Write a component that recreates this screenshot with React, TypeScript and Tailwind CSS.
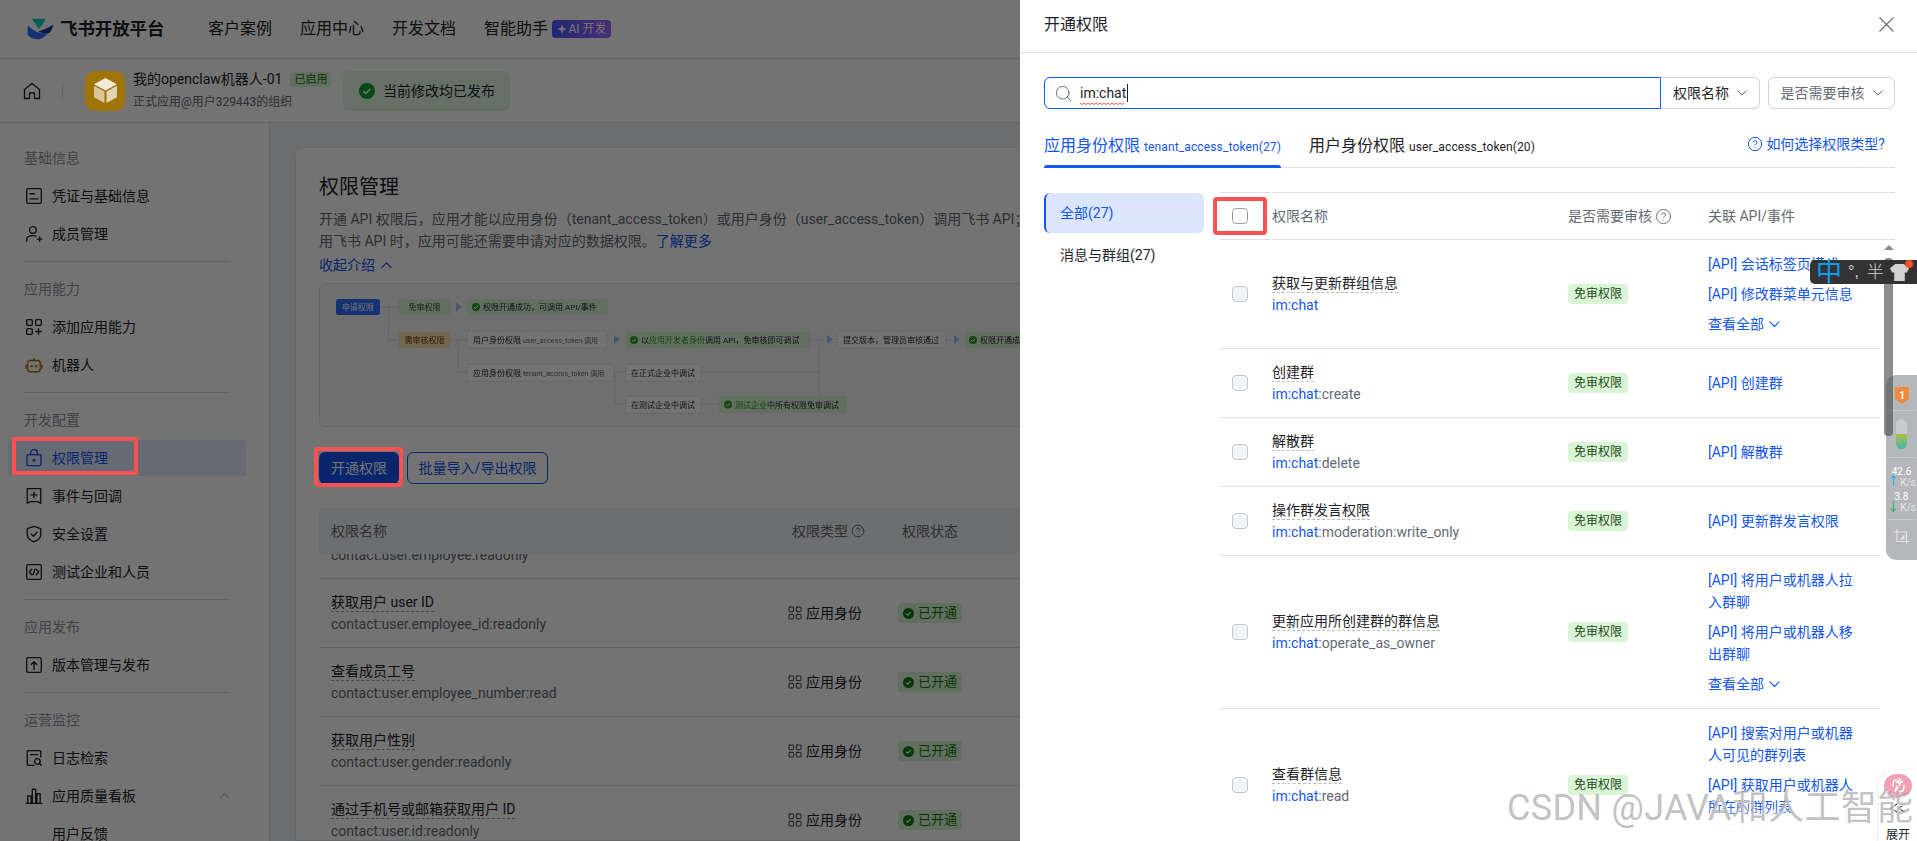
import React from "react";
import { Search, CircleHelp, LayoutGrid } from "lucide-react";

const S = ({ children, className = "" }: { children: React.ReactNode; className?: string }) => (
  <svg viewBox="0 0 16 16" fill="none" stroke="currentColor" strokeWidth="1.2" strokeLinecap="round" strokeLinejoin="round" className={"w-[18px] h-[18px] -mx-px shrink-0 " + className}>
    {children}
  </svg>
);

const Chev = ({ up, w = 11, className = "" }: { up?: boolean; w?: number; className?: string }) => (
  <svg viewBox="0 0 12 7" width={w} height={(w * 7) / 12} fill="none" stroke="currentColor" strokeWidth="1.200" strokeLinecap="round" strokeLinejoin="round" className={"shrink-0 " + className}>
    <path d={up ? "M1 6l5-5 5 5" : "M1 1l5 5 5-5"} />
  </svg>
);

const icons: Record<string, React.ReactNode> = {
  cred: <S><rect x="1.5" y="1.5" width="13" height="13" rx="1.5" /><path d="M4.5 6h4M4.5 10.5h7" /></S>,
  member: <S><circle cx="7" cy="4.5" r="3" /><path d="M1.5 14.5v-1.5c0-2 1.8-3.5 5.5-3.5 1 0 2 .1 2.8.4M11 12.5h4M13 10.5v4" /></S>,
  add: <S><rect x="1.5" y="1.5" width="5" height="5" rx="1" /><rect x="9.5" y="1.5" width="5" height="5" rx="1" /><rect x="1.5" y="9.5" width="5" height="5" rx="1" /><path d="M9.5 12h5M12 9.5v5" /></S>,
  bot: <S className="text-[#a8690c]"><rect x="2.5" y="4" width="11" height="10" rx="2" /><path d="M8 4V2M1 8v3M15 8v3" /><circle cx="6" cy="9" r=".5" fill="currentColor" /><circle cx="10" cy="9" r=".5" fill="currentColor" /></S>,
  perm: <S><rect x="1.8" y="5" width="12.4" height="9.8" rx="1.2" /><path d="M5 5V3.5a3 3 0 0 1 6 0V5" /><circle cx="8" cy="10" r=".7" fill="currentColor" /></S>,
  event: <S><path d="M2 1.5h12v13l-2.5-1.5h-7L2 14.5z" /><path d="M5.5 7h5M8 4.5v5" /></S>,
  safe: <S><path d="M8 1.2l6 2v5.5c0 3-2.5 5-6 6.3-3.5-1.3-6-3.3-6-6.3V3.200z" /><path d="M5.5 8l2 2 3.200-3.500" /></S>,
  test: <S><rect x="1.5" y="1.500" width="13" height="13" rx="1.500" /><path d="M6 5.500L3.800 8 6 10.500M10 5.500L12.200 8 10 10.500M8.800 5.500l-1.600 5" /></S>,
  ver: <S><rect x="1.500" y="1.500" width="13" height="13" rx="1.500" /><path d="M8 12V5M5.500 7.500L8 5l2.500 2.500" /></S>,
  log: <S><path d="M14 7V2.500a1 1 0 0 0-1-1H3a1 1 0 0 0-1 1v11a1 1 0 0 0 1 1h5" /><path d="M5 5h6" /><circle cx="11" cy="11" r="2.500" /><path d="M13 13l1.500 1.500" /></S>,
  chart: <S><path d="M1 14.500h14M2.500 14.500V8h3v6.500M6.500 14.500V2h3v12.500M10.500 14.500V6h3v8.500" /></S>,
};

function SideItem({ icon, text, active, chevron }: { icon?: string; text: string; active?: boolean; chevron?: boolean }) {
  return (
    <div className={"h-9 ml-2 w-[238px] rounded flex items-center gap-[10px] pl-[18px] pr-[17px] text-sm " + (active ? "bg-[#e1eaff] text-[#1456f0]" : "text-[#1f2329]")}>
      {icon ? icons[icon] : <span className="w-4 h-4 shrink-0" />}
      <span className="flex-1">{text}</span>
      {chevron && <Chev up w={9} className="text-[#8f959e]" />}
    </div>
  );
}

function Group({ label, items, last }: { label: string; items: { icon?: string; text: string; active?: boolean; chevron?: boolean }[]; last?: boolean }) {
  return (
    <div>
      <div className="h-[22px] leading-[22px] mb-[9px] pl-6 text-sm text-[#8f959e]">{label}</div>
      <div className="flex flex-col gap-[2px]">
        {items.map((it) => (
          <SideItem key={it.text} {...it} />
        ))}
      </div>
      {!last && <div className="mt-[9px] mb-4 ml-6 w-[206px] h-px bg-[#dee0e3]" />}
    </div>
  );
}

const Opened = () => (
  <span className="w-16 h-5 rounded bg-[#d9f5d6] text-[#0f7b0f] text-[13px] flex items-center justify-center gap-1">
    <svg viewBox="0 0 16 16" className="w-[11px] h-[11px]"><circle cx="8" cy="8" r="8" fill="#0f7b0f" /><path d="M4.500 8.200l2.400 2.300 4.300-4.500" stroke="#fff" strokeWidth="1.800" fill="none" /></svg>
    已开通
  </span>
);

const leftRows = [
  ["获取用户受雇信息", "contact:user.employee:readonly"],
  ["获取用户 user ID", "contact:user.employee_id:readonly"],
  ["查看成员工号", "contact:user.employee_number:read"],
  ["获取用户性别", "contact:user.gender:readonly"],
  ["通过手机号或邮箱获取用户 ID", "contact:user.id:readonly"],
];

function Box({ x, y, w, h, fill, stroke, dashed }: { x: number; y: number; w: number; h: number; fill: string; stroke?: string; dashed?: boolean }) {
  return <rect x={x} y={y} width={w} height={h} rx="2.500" fill={fill} stroke={stroke} strokeDasharray={dashed ? "1.500 1.500" : undefined} strokeWidth=".8" />;
}

function Diagram() {
  const dash = "#b7c4ea";
  const lines = "M60 23H78M68.500 23V56H78M130 56H147M138 56V88H147M294 88H305M295 88V120H305M381 120H399M381 88H499M499 56V112M490 56H505M626 56H632";
  const green = "#d9f5d6";
  const tx = "fill-[#1f2329]";
  const arrows = [139, 297, 510, 637];
  const check = (x: number, y: number) => (
    <g>
      <circle cx={x} cy={y} r="4" fill="#2ea121" />
      <path d={`M${x - 2} ${y}l1.500 1.500 2.500-2.800`} stroke="#fff" strokeWidth="1" fill="none" />
    </g>
  );
  return (
    <svg viewBox="0 0 760 144" className="w-[760px] h-[144px] block blur-[0.35px] font-['Roboto','Noto_Sans_CJK_SC',sans-serif]" fontSize="8">
      <path d={lines} stroke={dash} strokeWidth=".8" strokeDasharray="1.500 1.500" fill="none" />
      {arrows.map((x) => (
        <path key={x} d={x === 139 ? `M${x - 3} 18.500l6 4.500-6 4.500z` : `M${x - 3} 51l6 4.500-6 4.500z`} fill="#a8bdf5" />
      ))}
      <Box x={16} y={15} w={44} h={16} fill="#3370ff" />
      <text x={38} y={26} textAnchor="middle" fill="#fff">申请权限</text>
      <Box x={78.500} y={15} w={52} h={16} fill={green} />
      <text x={104.500} y={26} textAnchor="middle" fill="#1f5a1a">免审权限</text>
      <Box x={147} y={15} w={141} h={16} fill={green} />
      {check(156, 23)}
      <text x={163} y={26} className={tx}>权限开通成功，可调用 API/事件</text>
      <Box x={78.500} y={48} w={52} h={16} fill="#fde2b8" />
      <text x={104.500} y={59} textAnchor="middle" fill="#6b3a00">需审核权限</text>
      <Box x={147} y={47} w={140} h={17} fill="#fff" stroke={dash} dashed />
      <text x={153} y={59} className={tx}>用户身份权限 <tspan fontSize="7" fill="#646a73">user_access_token 调用</tspan></text>
      <Box x={305.500} y={48} w={185} h={16} fill={green} />
      {check(314, 56)}
      <text x={321} y={59} className={tx}>以<tspan fill="#2ea121">应用开发者身份</tspan>调用 API，免审核即可调试</text>
      <Box x={517} y={47} w={109} h={17} fill="#fff" stroke={dash} dashed />
      <text x={523} y={59} className={tx}>提交版本，管理员审核通过</text>
      <Box x={645} y={48} w={110} h={16} fill={green} />
      {check(653, 56)}
      <text x={660} y={59} className={tx}>权限开通成功</text>
      <Box x={147} y={80} w={147} h={17} fill="#fff" stroke={dash} dashed />
      <text x={153} y={92} className={tx}>应用身份权限 <tspan fontSize="7" fill="#646a73">tenant_access_token 调用</tspan></text>
      <Box x={305.500} y={80} w={75.500} h={17} fill="#fff" stroke={dash} dashed />
      <text x={311} y={92} className={tx}>在正式企业中调试</text>
      <Box x={305.500} y={112} w={75.500} h={17} fill="#fff" stroke={dash} dashed />
      <text x={311} y={124} className={tx}>在测试企业中调试</text>
      <Box x={399} y={112} w={128} h={17} fill={green} />
      {check(408, 120.500)}
      <text x={415} y={124} className={tx}><tspan fill="#2ea121">测试企业</tspan>中所有权限免审调试</text>
    </svg>
  );
}

function LeftPage() {
  return (
    <div className="relative w-[1020px] h-full shrink-0 overflow-hidden bg-white flex flex-col">
      <header className="h-[59px] shrink-0 border-b border-[#dee0e3] flex items-center pl-[27px]">
        <svg viewBox="50 33 82 66" className="w-[27px] h-[22px]">
          <path d="M65 35h42c-5 12-12 22-22 30z" fill="#00d6b9" />
          <path d="M82 72c14 0 32-10 48-20-3 14-8 24-14 27-12 1-24-2-34-7z" fill="#133c9a" />
          <path d="M52 55c10 10 24 19 36 22 9 2 18 2 26 1-8 11-18 19-32 19-14 0-30-8-30-18z" fill="#3370ff" />
        </svg>
        <span className="ml-[6px] w-[124px] text-[17.500px] font-bold tracking-[-0.100px] text-[#1f2329]">飞书开放平台</span>
        <nav className="ml-6 flex items-center gap-7 text-base text-[#1f2329]">
          <span>客户案例</span>
          <span>应用中心</span>
          <span>开发文档</span>
          <span className="flex items-center gap-1">
            智能助手
            <span className="w-[59px] h-[18px] rounded bg-gradient-to-r from-[#4a56ff] to-[#a066ff] text-white text-xs flex items-center justify-center gap-[2px]">
              <svg viewBox="0 0 10 10" className="w-[10px] h-[10px]"><path d="M5 0l1.200 3.800L10 5 6.200 6.200 5 10 3.800 6.200 0 5l3.800-1.200z" fill="#fff" /></svg>
              AI 开发
            </span>
          </span>
        </nav>
      </header>
      <div className="h-[64px] shrink-0 border-b border-[#dee0e3] flex items-center pl-[23px]">
        <svg viewBox="0 0 18 18" className="w-[18px] h-[18px]" fill="none" stroke="#1f2329" strokeWidth="1.300" strokeLinejoin="round">
          <path d="M1.500 7.500L9 1.500l7.500 6V16.500H11.500V11h-5v5.500H1.500z" />
        </svg>
        <span className="ml-[21px] w-px h-4 bg-[#dee0e3]" />
        <span className="relative z-20 ml-[22px] w-10 h-10 rounded-[10px] bg-[#a17408] flex items-center justify-center">
          <svg viewBox="0 0 26 26" className="w-[27px] h-[27px]">
            <path d="M13 1l11 6-11 6L2 7z" fill="#fff" fillOpacity=".85" />
            <path d="M2 8.500l10 5.500v11L2 19.500z" fill="#fff" fillOpacity=".6" />
            <path d="M24 8.500l-10 5.500v11l10-5.500z" fill="#fff" fillOpacity=".7" />
          </svg>
        </span>
        <div className="ml-2 w-[202px]">
          <div className="flex items-center h-[20px] text-sm text-[#1f2329]">
            我的openclaw机器人-01
            <span className="ml-2 h-[15px] px-1 rounded bg-[#d9f5d6] text-[#0f7b0f] text-[11px] leading-[15px]">已启用</span>
          </div>
          <div className="mt-[3px] text-xs text-[#646a73] leading-[20px]">正式应用@用户329443的组织</div>
        </div>
        <div className="ml-[8px] w-[167px] h-10 rounded-md bg-[#e4f8e4] flex items-center pl-4 gap-2 text-sm text-[#1f2329]">
          <svg viewBox="0 0 16 16" className="w-4 h-4"><circle cx="8" cy="8" r="8" fill="#0f9d3a" /><path d="M4.500 8.200l2.400 2.300 4.300-4.500" stroke="#fff" strokeWidth="1.600" fill="none" /></svg>
          当前修改均已发布
        </div>
      </div>
      <div className="flex-1 flex min-h-0">
        <aside className="w-[270px] shrink-0 border-r border-[#dee0e3] pt-6">
          <Group label="基础信息" items={[{ icon: "cred", text: "凭证与基础信息" }, { icon: "member", text: "成员管理" }]} />
          <Group label="应用能力" items={[{ icon: "add", text: "添加应用能力" }, { icon: "bot", text: "机器人" }]} />
          <Group label="开发配置" items={[{ icon: "perm", text: "权限管理", active: true }, { icon: "event", text: "事件与回调" }, { icon: "safe", text: "安全设置" }, { icon: "test", text: "测试企业和人员" }]} />
          <Group label="应用发布" items={[{ icon: "ver", text: "版本管理与发布" }]} />
          <Group last label="运营监控" items={[{ icon: "log", text: "日志检索" }, { icon: "chart", text: "应用质量看板", chevron: true }, { text: "用户反馈" }]} />
        </aside>
        <main className="flex-1 min-w-0 bg-[#f0f2f3] pl-[25px] pt-6">
          <div className="w-[800px] h-full bg-white border border-[#e5e6e8] rounded-t-lg pl-[23px] pt-[25px]">
            <h1 className="text-xl leading-7 text-[#1f2329]">权限管理</h1>
            <div className="mt-[7px] text-sm leading-[22px] text-[#646a73] whitespace-nowrap">
              <div>开通 API 权限后，应用才能以应用身份（tenant_access_token）或用户身份（user_access_token）调用飞书 API；</div>
              <div>用飞书 API 时，应用可能还需要申请对应的数据权限。<span className="text-[#1456f0]">了解更多</span></div>
              <div className="mt-[2px] flex items-center gap-[6px] text-[#1456f0]">收起介绍 <Chev up w={11} /></div>
            </div>
            <div className="mt-[7px] w-[760px] h-[144px] rounded-md border border-[#e5e6e8] bg-[#f5f6f7] overflow-hidden">
              <Diagram />
            </div>
            <div className="mt-[25px] flex gap-2">
              <button className="w-20 h-8 rounded-md bg-[#1456f0] text-white text-sm">开通权限</button>
              <button className="w-[141px] h-8 rounded-md border border-[#1456f0] text-[#1456f0] text-sm">批量导入/导出权限</button>
            </div>
            <div className="mt-6">
              <div className="relative z-[1] h-[46px] bg-[#f2f3f5] grid grid-cols-[470px_109px_1fr] items-center text-sm text-[#646a73]">
                <span className="pl-3">权限名称</span>
                <span className="pl-[3px] flex items-center gap-[3px]">权限类型 <CircleHelp className="w-[14px] h-[14px]" strokeWidth={1.600} /></span>
                <span className="pl-1">权限状态</span>
              </div>
              <div className="-mt-[44px]">
                {leftRows.map(([n, c]) => (
                  <div key={c} className="h-[69px] shrink-0 border-b border-[#dee0e3] grid grid-cols-[470px_109px_1fr] items-center text-sm">
                    <div className="pl-3 leading-[22px]">
                      <div><span className="inline-block leading-[18px] border-b border-dashed border-[#a0a4aa] text-[#1f2329]">{n}</span></div>
                      <div className="text-[#646a73]">{c}</div>
                    </div>
                    <div className="text-[#1f2329] -ml-[2px] flex items-center gap-[3px]"><LayoutGrid className="w-4 h-4" strokeWidth={1.300} /> 应用身份</div>
                    <Opened />
                  </div>
                ))}
              </div>
            </div>
          </div>
        </main>
      </div>
      <div className="absolute inset-0 z-[2] bg-black/55" />
    </div>
  );
}

const rows: { n: string; c: string; links: string[]; more?: boolean }[] = [
  { n: "获取与更新群组信息", c: "", links: ["[API] 会话标签页模式", "[API] 修改群菜单元信息"], more: true },
  { n: "创建群", c: ":create", links: ["[API] 创建群"] },
  { n: "解散群", c: ":delete", links: ["[API] 解散群"] },
  { n: "操作群发言权限", c: ":moderation:write_only", links: ["[API] 更新群发言权限"] },
  { n: "更新应用所创建群的群信息", c: ":operate_as_owner", links: ["[API] 将用户或机器人拉入群聊", "[API] 将用户或机器人移出群聊"], more: true },
  { n: "查看群信息", c: ":read", links: ["[API] 搜索对用户或机器人可见的群列表", "[API] 获取用户或机器人所在的群列表"], more: true },
];

function Drawer() {
  return (
    <div className="relative flex-1 h-full flex flex-col bg-white">
      <div className="h-[53px] shrink-0 border-b border-[#dee0e3] flex items-center justify-between pl-6 pr-[23px]">
        <span className="text-base text-[#1f2329] -mt-[3px]">开通权限</span>
        <svg viewBox="0 0 15 15" className="w-[15px] h-[15px] -mt-[3px]" fill="none" stroke="#646a73" strokeWidth="1.100"><path d="M.5.5l14 14M14.500.5l-14 14" /></svg>
      </div>
      <div className="pl-6 pr-[22px] shrink-0">
        <div className="mt-6 flex h-8">
          <div className="relative w-[617px] rounded-l-md border border-[#1456f0] flex items-center pl-[9px] text-sm text-[#1f2329]">
            <Search className="w-[19px] h-[19px] text-[#646a73]" strokeWidth={1.200} />
            <span className="relative ml-[7px] pr-px border-r border-[#1f2329] leading-[18px]">
              im:chat
              <svg viewBox="0 0 46 3" className="absolute left-0 top-[18px] w-[46px] h-[3px]"><path d="M0 1l2 1.500 2-1.500 2 1.500 2-1.500 2 1.500 2-1.500 2 1.500 2-1.500 2 1.500 2-1.500 2 1.500 2-1.500 2 1.500 2-1.500 2 1.500 2-1.500 2 1.500 2-1.500 2 1.500 2-1.500 2 1.500 2-1.500" stroke="#e5383b" strokeWidth=".8" fill="none" /></svg>
            </span>
          </div>
          <div className="w-[99px] rounded-r-md border border-l-0 border-[#d0d3d6] flex items-center justify-center gap-2 text-sm text-[#1f2329]">
            权限名称 <Chev w={10} className="text-[#646a73]" />
          </div>
          <div className="ml-2 w-[127px] rounded-md border border-[#d0d3d6] flex items-center justify-center gap-2 text-sm text-[#646a73]">
            是否需要审核 <Chev w={10} />
          </div>
        </div>
        <div className="mt-4 h-[43px] border-b border-[#dee0e3] flex items-start justify-between pt-[9px]">
          <div className="flex gap-7">
            <div className="relative h-[31px] text-[#1456f0]">
              <span className="text-base">应用身份权限</span> <span className="text-xs tracking-[0.13px]">tenant_access_token(27)</span>
              <span className="absolute left-0 right-0 top-[31px] h-[3px] rounded-t bg-[#1456f0]" />
            </div>
            <div className="text-[#1f2329]"><span className="text-base">用户身份权限</span> <span className="text-xs tracking-[0.13px]">user_access_token(20)</span></div>
          </div>
          <div className="flex items-center gap-[3px] pr-[10px] text-sm text-[#1456f0]"><CircleHelp className="w-4 h-4" strokeWidth={1.500} /> 如何选择权限类型?</div>
        </div>
      </div>
      <div className="flex-1 min-h-0 flex pl-6 pr-[22px] mt-6">
        <div className="w-40 shrink-0 pt-px text-sm flex flex-col gap-[2px]">
          <div className="h-10 rounded-md border-l-2 border-[#1456f0] bg-[#dbe6fd] text-[#1456f0] pl-[14px] flex items-center">全部(27)</div>
          <div className="h-10 pl-4 flex items-center text-[#1f2329]">消息与群组(27)</div>
        </div>
        <div className="ml-4 flex-1 min-w-0 flex flex-col border-t border-[#dee0e3]">
          <div className="h-[47px] shrink-0 border-b border-[#dee0e3] grid grid-cols-[52px_296px_140px_1fr] items-center text-sm text-[#646a73]">
            <span className="ml-3 w-4 h-4 rounded border border-[#9ea2a8] bg-white" />
            <span>权限名称</span>
            <span className="flex items-center gap-[3px]">是否需要审核 <CircleHelp className="w-[17px] h-[17px]" strokeWidth={1.300} /></span>
            <span>关联 API/事件</span>
          </div>
          <div className="flex-1 min-h-0 overflow-hidden w-[660px]">
            {rows.map((r) => (
              <div key={r.n} className="min-h-[69px] border-b border-[#dee0e3] grid grid-cols-[52px_296px_140px_1fr] items-center text-sm leading-[22px] py-[13px] box-border">
                <span className="ml-3 w-4 h-4 rounded border border-[#c5c8cc] bg-[#f2f3f5]" />
                <div className="-my-3">
                  <div><span className="inline-block leading-[18px] border-b border-dashed border-[#bbbfc4] text-[#1f2329]">{r.n}</span></div>
                  <div className="text-[#646a73]"><span className="text-[#1456f0]">im:chat</span>{r.c}</div>
                </div>
                <span className="w-[60px] h-5 rounded bg-[#d9f5d6] text-[#1f4a1a] text-xs flex items-center justify-center">免审权限</span>
                <div className={"w-[153px] flex flex-col gap-2 text-[#1456f0] " + (r.links.length === 1 ? "-my-3" : "")}>
                  {r.links.map((l) => <div key={l}>{l}</div>)}
                  {r.more && <div className="flex items-center gap-[5px]">查看全部 <Chev w={11} /></div>}
                </div>
              </div>
            ))}
          </div>
        </div>
      </div>
      <div className="relative h-[9px] shrink-0 bg-white border-t border-[#dee0e3]">
        <div className="absolute left-0 right-0 bottom-full h-7 bg-gradient-to-t from-white to-transparent" />
      </div>
    </div>
  );
}

function Overlays() {
  return (
    <>
      {/* red annotations */}
      <div className="absolute z-10 left-[12px] top-[437px] w-[126px] h-[38px] border-4 border-[#fa5252]" />
      <div className="absolute z-10 left-[314px] top-[447px] w-[89px] h-[40px] border-4 border-[#fa5252] rounded-sm" />
      <div className="absolute z-10 left-[1213px] top-[197px] w-[54px] h-[38px] border-4 border-[#fa5252] rounded-sm" />

      {/* scrollbar */}
      <div className="absolute z-10 left-[1884px] top-[240px] w-[9px] h-[18px] flex justify-center pt-[5px]">
        <span className="w-0 h-0 border-x-[5px] border-x-transparent border-b-[5px] border-b-[#8c8c8c]" />
      </div>

      {/* system widget */}
      <div className="absolute z-10 left-[1886px] top-[375px] w-[31px] h-[185px] rounded-l-[10px] bg-[#b6b7bb] flex flex-col items-center text-white text-[10px] leading-[11px]">
        <svg viewBox="0 0 14 17" className="mt-[12px] w-[14px] h-[17px]"><path d="M0 0h14v12l-7 5-7-5z" fill="#f08a3c" /><text x="7" y="11.500" fontSize="10" fontWeight="700" textAnchor="middle" fill="#fff">1</text></svg>
        <span className="mt-[6px] w-[29px] h-px bg-[#c8c9cc]" />
        <span className="mt-2 w-[11px] h-[30px] rounded-full overflow-hidden bg-[#c9cacd] flex items-end">
          <span className="w-full h-[15px] bg-gradient-to-b from-[#a6c23a] to-[#3ab5a8]" />
        </span>
        <span className="mt-2 w-[29px] h-px bg-[#c8c9cc]" />
        <span className="mt-[8px]">42.6</span>
        <span className="h-[11px] flex items-center gap-[1px] text-[#e8e8ea]"><span className="text-[#14a8ff] text-xs leading-[11px]">↑</span>K/s</span>
        <span className="mt-[3px]">3.8</span>
        <span className="h-[11px] flex items-center gap-[1px] text-[#e8e8ea]"><span className="text-[#0bb55a] text-xs leading-[11px]">↓</span>K/s</span>
        <span className="mt-[6px] w-[29px] h-px bg-[#c8c9cc]" />
        <svg viewBox="0 0 16 16" className="mt-[9px] w-[16px] h-[16px]" fill="none" stroke="#e4e4e6" strokeWidth="1.200"><path d="M3 0v12.500h12.500M0 3h12.500v12.500" /><path d="M10.500 5.500v5h-5z" fill="#e4e4e6" stroke="none" /></svg>
      </div>
      <div className="absolute z-10 left-[1884px] top-[258px] w-[9px] h-[178px] rounded-[4px] bg-[#505050]/65" />

      {/* IME bar */}
      <div className="absolute z-10 left-[1810px] top-[260px] w-[107px] h-6 rounded-l-[5px] bg-[#333333] flex items-center pl-[6px] text-[#cfcfcf]">
        <span className="w-[26px] text-[26px] leading-6 text-[#0f9bf5]">中</span>
        <span className="ml-[6px] text-base leading-4 font-['Liberation_Sans',sans-serif]">°,</span>
        <span className="ml-[8px] text-[17px] leading-4 font-light">半</span>
        <svg viewBox="0 0 18 16" className="ml-[6px] w-[19px] h-[17px]"><path d="M5 0h8l5 4-2 4h-2v8H4V8H2L0 4z" fill="#d3d3d3" /></svg>
        <span className="absolute left-[95px] top-0 w-[8px] h-[8px] rounded-full bg-[#ff4f28]" />
      </div>

      {/* assistant */}
      <div className="absolute z-10 left-[1879px] top-[770px] w-[38px] h-[71px] rounded-tl-[18px] bg-white flex flex-col items-center pt-1 shadow-[-2px_0_6px_rgba(0,0,0,0.06)]">
        <span className="w-[28px] h-[28px] rounded-full bg-[#f0a0b4] flex items-center justify-center">
          <svg viewBox="0 0 16 16" className="w-[17px] h-[17px]" fill="none" stroke="#fff" strokeWidth="1.300"><path d="M3 9V6c0-2 1.500-3.500 3.500-3.500M13 7v3c0 2-1.500 3.500-3.500 3.500" /><path d="M9 2l.8 2 2 .8-2 .8L9 7.600l-.8-2-2-.8 2-.8zM4.500 14l2-5 2 5M5.300 12.500h2.500" /></svg>
        </span>
        <svg viewBox="0 0 18 12" className="mt-[5px] w-[18px] h-[12px]" fill="none" stroke="#1f2329" strokeWidth="1.200"><path d="M8 1L1 6l7 5M17 1l-7 5 7 5" /></svg>
        <span className="mt-[16px] text-xs leading-[12px] text-[#1f2329]">展开</span>
      </div>

      {/* watermark */}
      <div className="absolute z-10 left-[1507px] top-[783px] whitespace-nowrap text-[36px] tracking-[0.3px] leading-[50px] text-[#9a9a9a]/60 [text-shadow:1px_1px_1px_rgba(255,255,255,0.8)] font-['Roboto','Noto_Sans_CJK_SC',sans-serif]">
        CSDN @JAVA和人工智能
      </div>
    </>
  );
}

export default function App() {
  return (
    <div className="relative w-[1917px] h-[841px] overflow-hidden flex font-['Roboto','Noto_Sans_CJK_SC',sans-serif]">
      <LeftPage />
      <Drawer />
      <Overlays />
    </div>
  );
}
